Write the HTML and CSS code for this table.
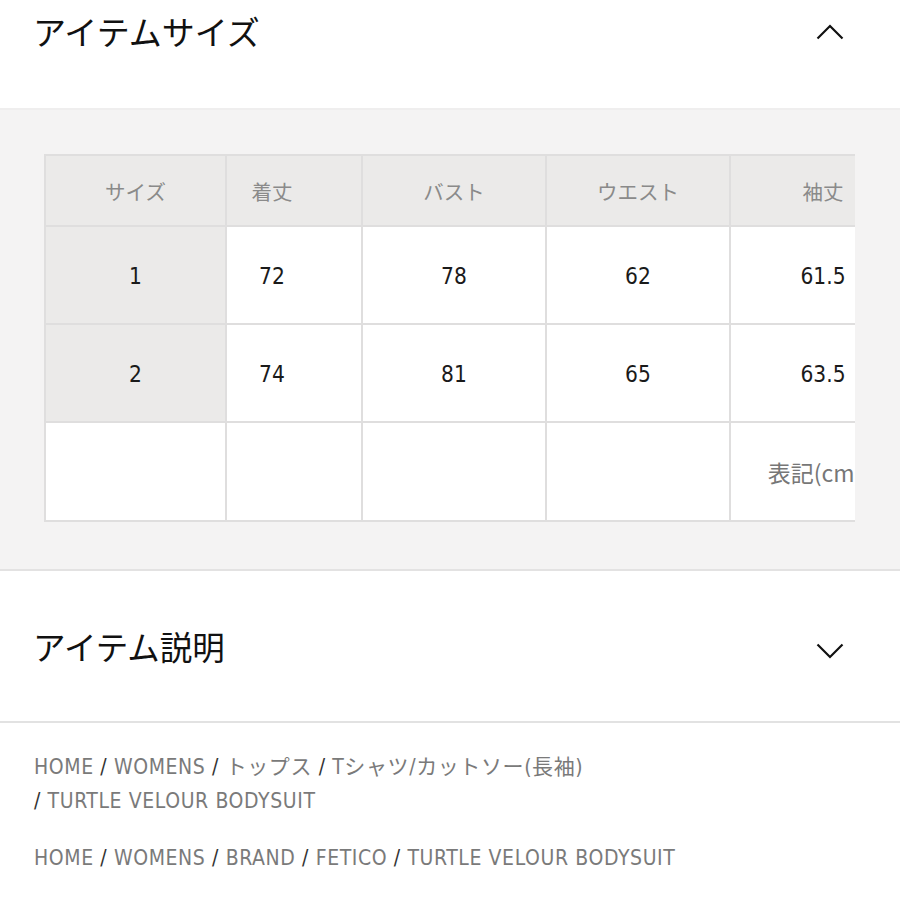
FILE: index.html
```html
<!DOCTYPE html>
<html lang="ja">
<head>
<meta charset="utf-8">
<title>アイテムサイズ</title>
<link rel="stylesheet" href="styles.css">
</head>
<body>
  <section class="acc acc-open">
    <div class="acc-head">
      <h2 class="acc-title">アイテムサイズ</h2>
      <svg class="chev" width="28" height="16" viewBox="0 0 28 16"><polyline points="1.5,14.5 14,2 26.5,14.5" fill="none" stroke="#111" stroke-width="2.2"/></svg>
    </div>
    <div class="size-band">
      <div class="size-scroll">
        <div class="size-grid">
          <div class="c th">サイズ</div>
          <div class="c th c2">着丈</div>
          <div class="c th">バスト</div>
          <div class="c th">ウエスト</div>
          <div class="c th">袖丈</div>

          <div class="c rh num">1</div>
          <div class="c num c2">72</div>
          <div class="c num">78</div>
          <div class="c num">62</div>
          <div class="c num">61.5</div>

          <div class="c rh num">2</div>
          <div class="c num c2">74</div>
          <div class="c num">81</div>
          <div class="c num">65</div>
          <div class="c num">63.5</div>

          <div class="c"></div>
          <div class="c c2"></div>
          <div class="c"></div>
          <div class="c"></div>
          <div class="c note">表記(cm)</div>
        </div>
      </div>
    </div>
  </section>

  <section class="acc acc-closed">
    <div class="acc-head2">
      <h2 class="acc-title">アイテム説明</h2>
      <svg class="chev2" width="28" height="16" viewBox="0 0 28 16"><polyline points="1.5,1.5 14,14 26.5,1.5" fill="none" stroke="#111" stroke-width="2.2"/></svg>
    </div>
  </section>

  <nav class="crumbs">
    <p class="crumb-line"><span>HOME</span> <i>/</i> <span>WOMENS</span> <i>/</i> <span>トップス</span> <i>/</i> <span>Tシャツ/カットソー(長袖)</span><br><i>/</i> <span>TURTLE VELOUR BODYSUIT</span></p>
    <p class="crumb-line"><span>HOME</span> <i>/</i> <span>WOMENS</span> <i>/</i> <span>BRAND</span> <i>/</i> <span>FETICO</span> <i>/</i> <span>TURTLE VELOUR BODYSUIT</span></p>
  </nav>
</body>
</html>
```
FILE: styles.css
```css
html, body {
  margin: 0;
  padding: 0;
  background: #fff;
}
body {
  font-family: "Noto Sans CJK JP", sans-serif;
  color: #111;
  width: 900px;
}
.acc-head {
  height: 108px;
  display: flex;
  align-items: flex-start;
  justify-content: space-between;
  padding: 8px 56px 0 33px;
  box-sizing: border-box;
}
.acc-title {
  margin: 0;
  font-weight: 400;
  font-size: 33px;
  line-height: 46px;
  color: #111;
}
.chev {
  margin-top: 16px;
}
.size-band {
  background: #f4f3f3;
  border-top: 2px solid #efeeee;
  border-bottom: 2px solid #e3e2e2;
  padding: 44px 0 47px 44px;
}
.size-scroll {
  width: 811px;
  overflow: hidden;
}
.size-grid {
  display: grid;
  grid-template-columns: 179px 134px 182px 182px 184px;
  grid-template-rows: 69px 96px 96px 97px;
  gap: 2px;
  padding: 2px;
  background: #dfdede;
  width: max-content;
}
.c {
  background: #fff;
  display: flex;
  align-items: center;
  justify-content: center;
  text-align: center;
}
.c2 {
  padding-right: 44px;
}
.th {
  background: #ebeae9;
  color: #8a8a8a;
  font-size: 20.5px;
}
.rh {
  background: #ebeae9;
}
.num {
  font-family: "DejaVu Sans Condensed", "DejaVu Sans", sans-serif;
  font-stretch: condensed;
  font-size: 22.5px;
  color: #1a1a1a;
  padding-top: 2px;
}
.num.c2 {
  padding-right: 44px;
}
.note {
  color: #777;
  font-size: 23px;
  white-space: nowrap;
  padding-right: 16px;
}
.acc-head2 {
  height: 152px;
  display: flex;
  align-items: center;
  justify-content: space-between;
  padding: 0 56px 0 33px;
  border-bottom: 2px solid #e2e2e2;
  box-sizing: border-box;
}
.acc-head2 .acc-title {
  font-size: 32.5px;
}
.chev2 {
  margin-top: 10px;
}
.crumbs {
  padding: 27px 34px 0;
}
.crumb-line {
  margin: 0 0 23px;
  font-family: "DejaVu Sans Condensed", "DejaVu Sans", "Noto Sans CJK JP", sans-serif;
  font-stretch: condensed;
  font-size: 21px;
  letter-spacing: 0.6px;
  line-height: 34px;
  color: #7a7a7a;
}
.crumb-line i {
  font-style: normal;
  color: #333;
}
```
